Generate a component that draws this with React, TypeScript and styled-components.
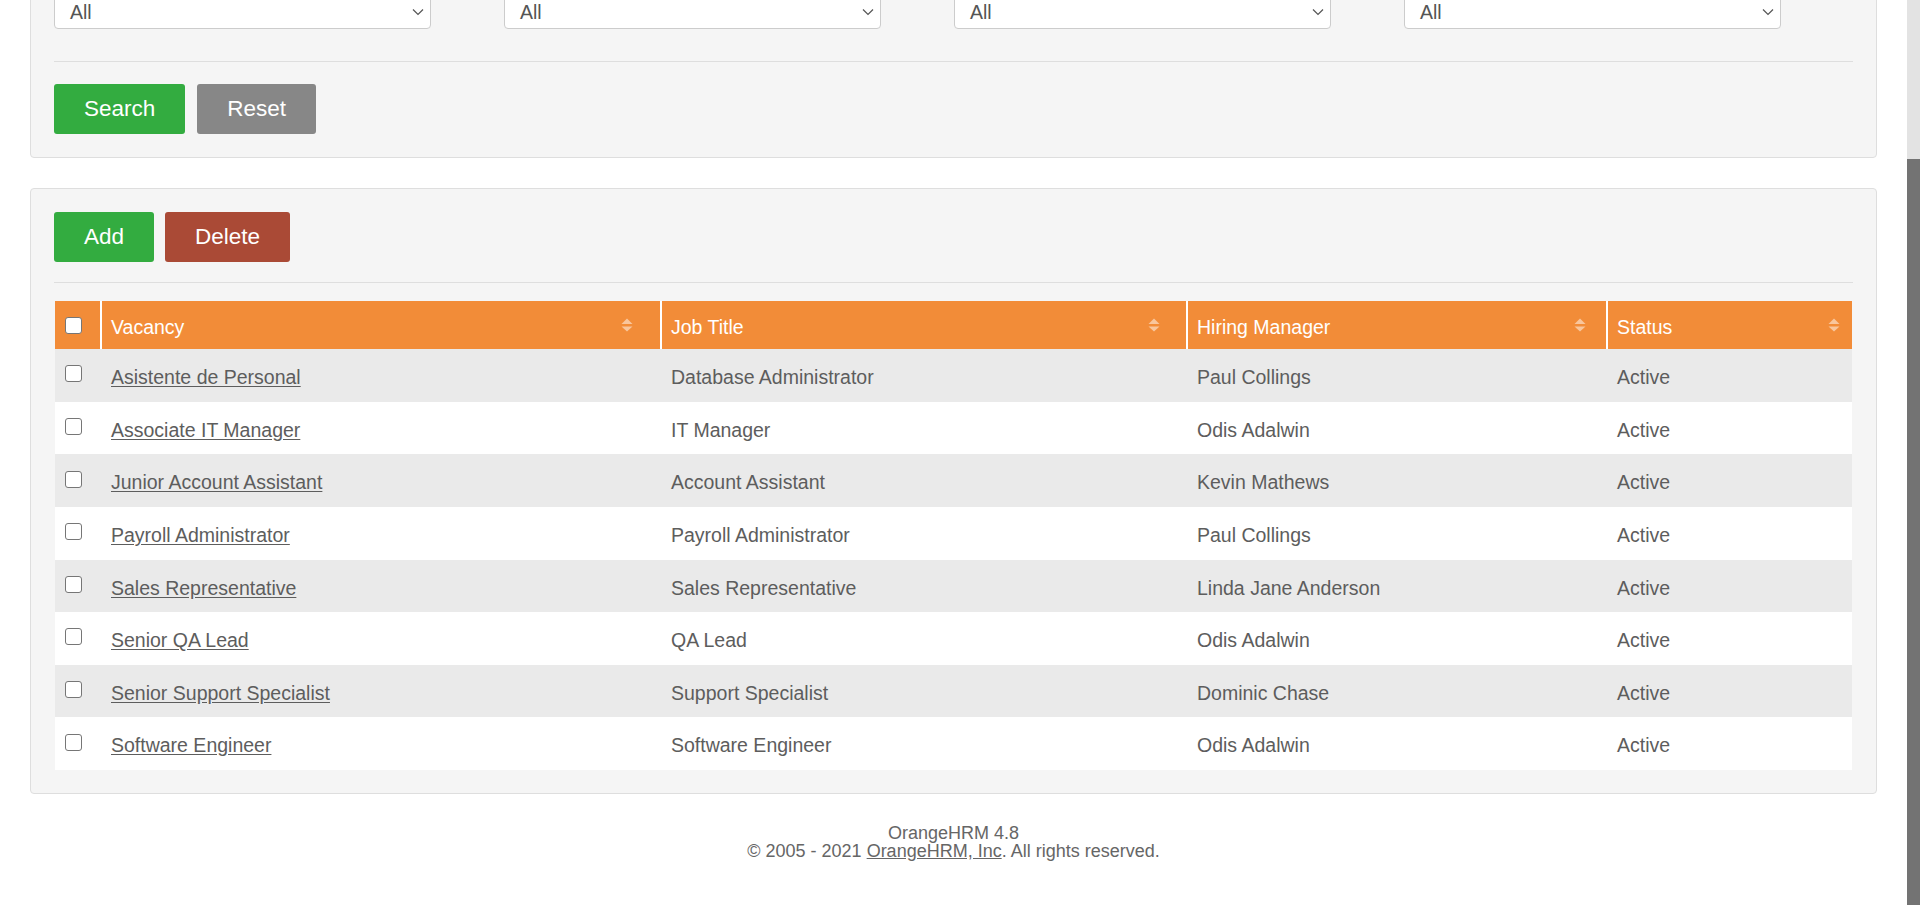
import React from "react";
import styled, { createGlobalStyle } from "styled-components";

const GlobalStyle = createGlobalStyle`
  html, body {
    margin: 0;
    padding: 0;
    height: 100%;
    overflow: hidden;
    background: #ffffff;
  }
  body {
    font-family: "Liberation Sans", Arial, Helvetica, sans-serif;
    color: #5d5d5d;
  }
  #root { height: 100%; }
  * { box-sizing: border-box; }
`;

const Screen = styled.div`
  display: flex;
  height: 100vh;
`;

const Viewport = styled.main`
  flex: 1;
  min-width: 0;
  display: flex;
  flex-direction: column;
  justify-content: flex-end;
  overflow: hidden;
`;

const Page = styled.div`
  flex: none;
  padding: 0 30px;
`;

const Scrollbar = styled.div`
  flex: 0 0 13px;
  display: flex;
  flex-direction: column;
  padding-top: 159px;
  background: #e3e3e3;
`;

const Thumb = styled.div`
  flex: 1;
  background: #737373;
`;

const Panel = styled.section<{ $top?: number }>`
  background: #f5f5f5;
  border: 1px solid #dedede;
  border-radius: 4px;
  padding: ${(p) => p.$top ?? 23}px 23px 23px;
  & + & {
    margin-top: 30px;
  }
`;

const FieldsRow = styled.div`
  display: grid;
  grid-template-columns: repeat(4, 377px);
  column-gap: 73px;
`;

const SelectBox = styled.div`
  height: 35px;
  display: flex;
  align-items: center;
  justify-content: space-between;
  padding: 1px 6px 0 15px;
  background: #ffffff;
  border: 1px solid #cccccc;
  border-radius: 4px;
  font-size: 19.5px;
  color: #555555;
`;

const Divider = styled.hr<{ $above: number; $below: number }>`
  height: 1px;
  border: none;
  background: #dedede;
  margin: ${(p) => p.$above}px 0 ${(p) => p.$below}px;
`;

const ButtonRow = styled.div<{ $gap: number }>`
  display: flex;
  gap: ${(p) => p.$gap}px;
`;

const buttonColors = {
  green: "#33ac40",
  gray: "#878787",
  red: "#aa4a36",
};

const Button = styled.button<{ $variant: keyof typeof buttonColors }>`
  height: 50px;
  padding: 0 30px;
  border: none;
  border-radius: 3px;
  background: ${(p) => buttonColors[p.$variant]};
  color: #ffffff;
  font-family: "Liberation Sans", Arial, Helvetica, sans-serif;
  font-size: 22.5px;
  cursor: pointer;
`;

const Table = styled.table`
  width: calc(100% - 2px);
  margin: 0 1px;
  table-layout: fixed;
  border-collapse: separate;
  border-spacing: 0;
  font-size: 19.5px;
`;

const HeadCell = styled.th<{ $first?: boolean }>`
  position: relative;
  height: 48px;
  padding: ${(p) => (p.$first ? "0 0 0 10px" : "4px 9px 0")};
  border-left: ${(p) => (p.$first ? "none" : "2px solid #ffffff")};
  background: #f28c38;
  color: #ffffff;
  font-weight: normal;
  text-align: left;
  vertical-align: middle;
`;

const SortIcon = styled.svg`
  position: absolute;
  top: 50%;
  left: calc((100% - 12px) * 0.95);
  width: 12px;
  height: 14px;
  transform: translateY(-50%);
`;

const Row = styled.tr<{ $striped: boolean }>`
  background: ${(p) => (p.$striped ? "#eaeaea" : "#ffffff")};
`;

const Cell = styled.td<{ $first?: boolean }>`
  height: 52.625px;
  padding: ${(p) => (p.$first ? "0 0 3px 10px" : "5px 9px 0")};
  border-left: ${(p) => (p.$first ? "none" : "2px solid transparent")};
  vertical-align: middle;
  line-height: 1.2;
  white-space: nowrap;
  color: #5d5d5d;
`;

const Check = styled.input.attrs({ type: "checkbox" })`
  appearance: none;
  display: block;
  width: 17px;
  height: 17px;
  margin: 0;
  background: #ffffff;
  border: 1px solid #767676;
  border-radius: 3px;
`;

const VacancyLink = styled.a`
  color: #5d5d5d;
  text-decoration: underline;
  text-underline-offset: 2px;
`;

const Footer = styled.footer`
  margin-top: 30px;
  padding-bottom: 45px;
  text-align: center;
  font-size: 18px;
  line-height: 18px;
  color: #666666;
`;

const FooterLink = styled.a`
  color: #666666;
  text-decoration: underline;
`;

const Chevron = () => (
  <svg width="12" height="8" viewBox="0 0 12 8" aria-hidden="true">
    <polyline points="1,1.5 6,6.5 11,1.5" fill="none" stroke="#555" strokeWidth="1.2" />
  </svg>
);

const Sort = () => (
  <SortIcon viewBox="0 0 12 14" aria-hidden="true">
    <path d="M6 0.5 L11.5 6 H0.5 Z" fill="rgba(255,255,255,0.5)" />
    <path d="M0.5 8.5 H11.5 L6 13.5 Z" fill="rgba(255,255,255,0.5)" />
  </SortIcon>
);

const columns = [
  { label: "Vacancy", width: 560 },
  { label: "Job Title", width: 526 },
  { label: "Hiring Manager", width: 420 },
  { label: "Status", width: 246 },
];

const rows = [
  ["Asistente de Personal", "Database Administrator", "Paul Collings", "Active"],
  ["Associate IT Manager", "IT Manager", "Odis Adalwin", "Active"],
  ["Junior Account Assistant", "Account Assistant", "Kevin Mathews", "Active"],
  ["Payroll Administrator", "Payroll Administrator", "Paul Collings", "Active"],
  ["Sales Representative", "Sales Representative", "Linda Jane Anderson", "Active"],
  ["Senior QA Lead", "QA Lead", "Odis Adalwin", "Active"],
  ["Senior Support Specialist", "Support Specialist", "Dominic Chase", "Active"],
  ["Software Engineer", "Software Engineer", "Odis Adalwin", "Active"],
];

export default function App() {
  return (
    <>
      <GlobalStyle />
      <Screen>
        <Viewport>
          <Page>
            <Panel $top={60}>
              <FieldsRow>
                {[0, 1, 2, 3].map((i) => (
                  <SelectBox key={i}>
                    <span>All</span>
                    <Chevron />
                  </SelectBox>
                ))}
              </FieldsRow>
              <Divider $above={32} $below={22} />
              <ButtonRow $gap={12}>
                <Button $variant="green">Search</Button>
                <Button $variant="gray">Reset</Button>
              </ButtonRow>
            </Panel>

            <Panel>
              <ButtonRow $gap={11}>
                <Button $variant="green">Add</Button>
                <Button $variant="red">Delete</Button>
              </ButtonRow>
              <Divider $above={20} $below={18} />
              <Table>
                <colgroup>
                  <col style={{ width: 45 }} />
                  {columns.map((c) => (
                    <col key={c.label} style={{ width: c.width }} />
                  ))}
                </colgroup>
                <thead>
                  <tr>
                    <HeadCell $first>
                      <Check />
                    </HeadCell>
                    {columns.map((c) => (
                      <HeadCell key={c.label}>
                        {c.label}
                        <Sort />
                      </HeadCell>
                    ))}
                  </tr>
                </thead>
                <tbody>
                  {rows.map((r, i) => (
                    <Row key={r[0]} $striped={i % 2 === 0}>
                      <Cell $first>
                        <Check />
                      </Cell>
                      <Cell>
                        <VacancyLink href="#">{r[0]}</VacancyLink>
                      </Cell>
                      <Cell>{r[1]}</Cell>
                      <Cell>{r[2]}</Cell>
                      <Cell>{r[3]}</Cell>
                    </Row>
                  ))}
                </tbody>
              </Table>
            </Panel>

            <Footer>
              <div>OrangeHRM 4.8</div>
              <div>
                © 2005 - 2021 <FooterLink href="#">OrangeHRM, Inc</FooterLink>. All rights reserved.
              </div>
            </Footer>
          </Page>
        </Viewport>
        <Scrollbar>
          <Thumb />
        </Scrollbar>
      </Screen>
    </>
  );
}
